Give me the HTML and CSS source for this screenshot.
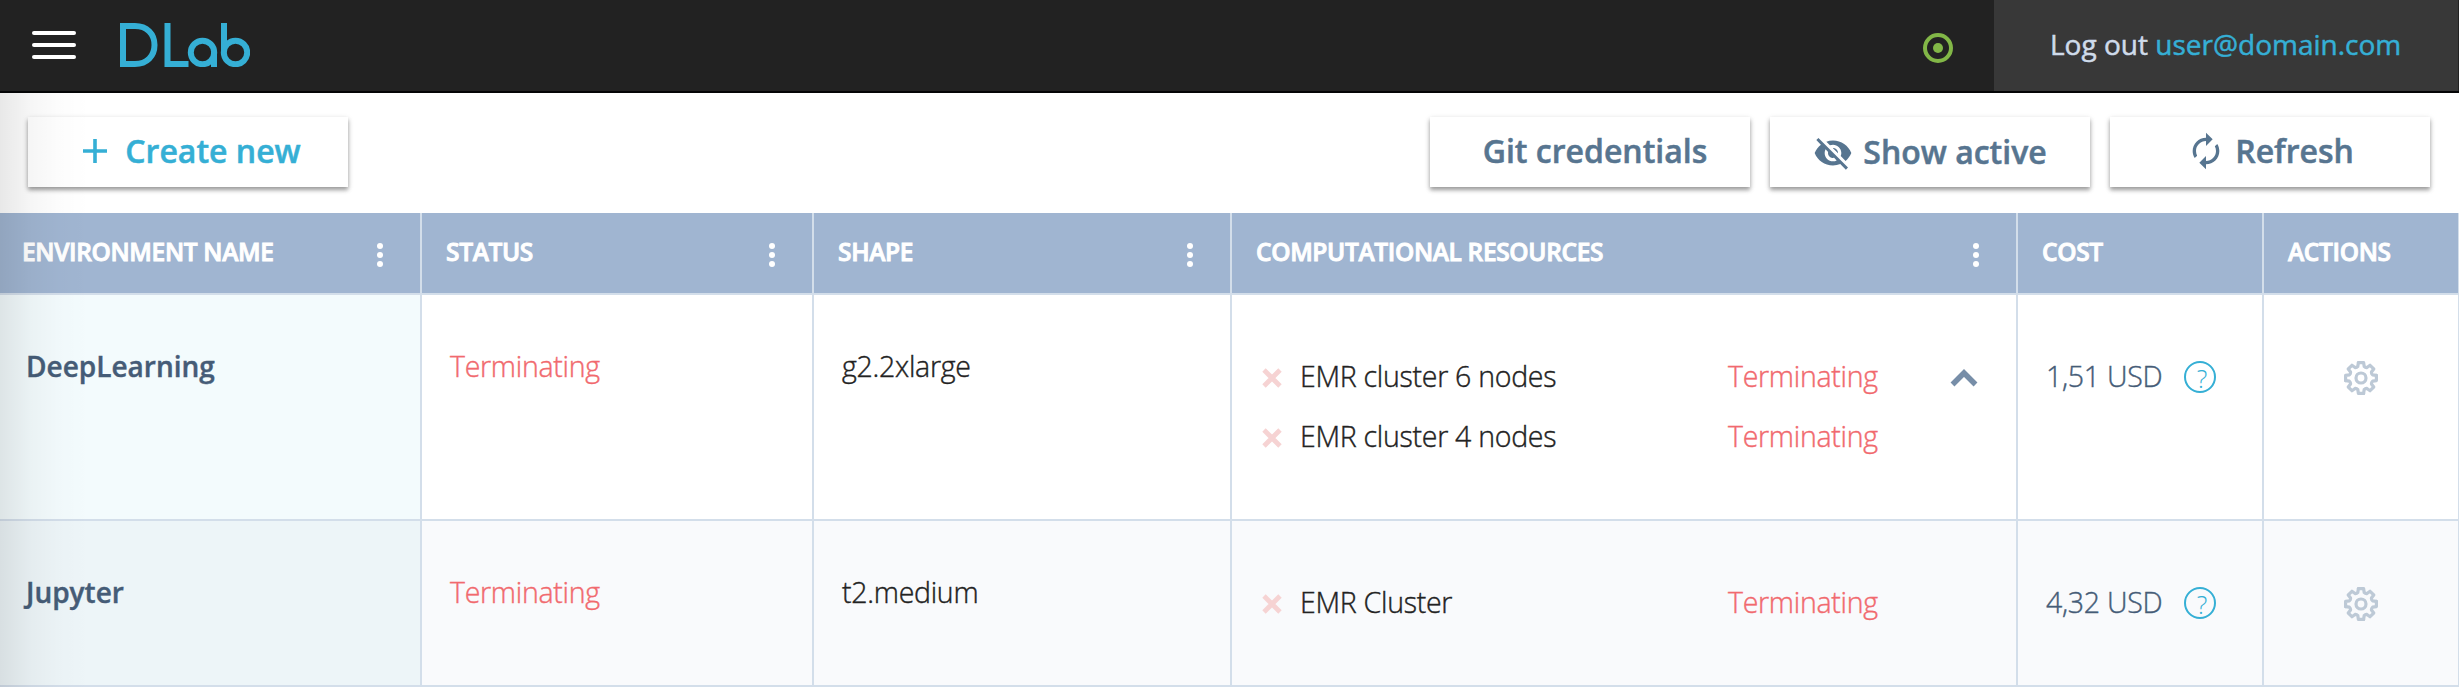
FILE: index.html
```html
<!DOCTYPE html>
<html lang="en">
<head>
<meta charset="utf-8">
<title>DLab</title>
<link rel="stylesheet" href="styles.css">
</head>
<body>
<svg class="defs" width="0" height="0">
  <symbol id="dots" viewBox="0 0 6 24"><circle cx="3" cy="3" r="3"/><circle cx="3" cy="12" r="3"/><circle cx="3" cy="21" r="3"/></symbol>
  <symbol id="cross" viewBox="0 0 20 20"><path d="M2 2 18 18M18 2 2 18" fill="none" stroke="currentColor" stroke-width="4.800"/></symbol>
  <path id="teeth" d="M-2.600-15.400H2.600L3.200-11.600Q4.300-10.300 5.940-10.460L9.050-12.730 12.730-9.050 10.460-5.940Q10.300-4.300 11.600-3.200L15.400-2.600"/>
  <symbol id="gear" viewBox="-17 -17 34 34"><g fill="none" stroke="currentColor" stroke-width="3.200" stroke-linejoin="round" stroke-linecap="round"><circle r="5"/><use href="#teeth"/><use href="#teeth" transform="rotate(90)"/><use href="#teeth" transform="rotate(180)"/><use href="#teeth" transform="rotate(270)"/></g></symbol>
</svg>
<header class="topbar">
  <div class="burger"><i></i><i></i><i></i></div>
  <svg class="logo" role="img" aria-label="DLab" viewBox="0 0 130 44"><g fill="none" stroke="#35afd5" stroke-width="6"><path d="M3 3H15C27 3 34.500 11 34.500 22S27 41 15 41H3Z"/><path d="M47.500 0V41H68.500"/><circle cx="82.500" cy="29.500" r="11.700"/><path d="M94 29V44"/><path d="M104 0V29.500"/><circle cx="115.500" cy="29.500" r="11.700"/></g></svg>
  <svg class="health" viewBox="0 0 30 30"><circle cx="15" cy="15" r="13" fill="none" stroke="#82b747" stroke-width="4"/><circle cx="15" cy="15" r="5" fill="#82b747"/></svg>
  <div class="logout">Log out&nbsp;<a>user@domain.com</a></div>
</header>
<div class="tools">
  <button class="btn create"><svg viewBox="0 0 24 24" width="24" height="24"><path d="M12 0V24M0 12H24" stroke="currentColor" stroke-width="3.600"/></svg>Create new</button>
  <button class="btn git">Git credentials</button>
  <button class="btn show"><svg viewBox="0 0 24 24" width="40" height="40"><path fill="currentColor" d="M12 7c2.760 0 5 2.240 5 5 0 .65-.13 1.260-.36 1.830l2.920 2.920c1.510-1.260 2.700-2.890 3.430-4.750-1.730-4.390-6-7.500-11-7.500-1.400 0-2.740.25-3.980.7l2.160 2.160C10.740 7.130 11.350 7 12 7zM2 4.270l2.280 2.280.46.46C3.080 8.300 1.780 10.020 1 12c1.730 4.390 6 7.500 11 7.500 1.550 0 3.030-.3 4.380-.84l.42.42L19.730 22 21 20.730 3.270 3 2 4.270zM7.530 9.800l1.550 1.550c-.05.21-.08.43-.08.65 0 1.660 1.340 3 3 3 .22 0 .44-.03.65-.08l1.550 1.550c-.67.33-1.410.53-2.200.53-2.760 0-5-2.240-5-5 0-.79.2-1.530.53-2.200zm4.310-.78l3.150 3.150.02-.16c0-1.660-1.340-3-3-3l-.17.01z"/></svg>Show active</button>
  <button class="btn refresh"><svg viewBox="0 0 24 24" width="40" height="40"><path fill="currentColor" d="M12 6v3l4-4-4-4v3c-4.420 0-8 3.580-8 8 0 1.570.46 3.030 1.240 4.260L6.700 14.800c-.45-.83-.7-1.790-.7-2.800 0-3.310 2.690-6 6-6zm6.760 1.740L17.300 9.200c.44.84.7 1.790.7 2.800 0 3.310-2.690 6-6 6v-3l-4 4 4 4v-3c4.420 0 8-3.580 8-8 0-1.570-.46-3.030-1.240-4.260z"/></svg>Refresh</button>
</div>
<main class="grid">
  <div class="row head">
    <div>Environment name<svg class="dots"><use href="#dots"/></svg></div>
    <div>Status<svg class="dots"><use href="#dots"/></svg></div>
    <div>Shape<svg class="dots"><use href="#dots"/></svg></div>
    <div>Computational resources<svg class="dots"><use href="#dots"/></svg></div>
    <div>Cost</div>
    <div>Actions</div>
  </div>
  <div class="row first">
    <div class="name">DeepLearning</div>
    <div class="red">Terminating</div>
    <div>g2.2xlarge</div>
    <div class="resources">
      <div class="resource"><svg class="cross"><use href="#cross"/></svg><span class="cluster">EMR cluster 6 nodes</span><span class="red">Terminating</span><svg class="chevron" viewBox="0 0 28 18"><path d="M2.500 15.500 14 4 25.500 15.500" fill="none" stroke="#778ea8" stroke-width="5.500"/></svg></div>
      <div class="resource"><svg class="cross"><use href="#cross"/></svg><span class="cluster">EMR cluster 4 nodes</span><span class="red">Terminating</span></div>
    </div>
    <div class="cost">1,51 USD<span class="help">?</span></div>
    <div class="actions"><svg class="gear"><use href="#gear"/></svg></div>
  </div>
  <div class="row second">
    <div class="name">Jupyter</div>
    <div class="red">Terminating</div>
    <div>t2.medium</div>
    <div class="resources">
      <div class="resource"><svg class="cross"><use href="#cross"/></svg><span class="cluster">EMR Cluster</span><span class="red">Terminating</span></div>
    </div>
    <div class="cost">4,32 USD<span class="help">?</span></div>
    <div class="actions"><svg class="gear"><use href="#gear"/></svg></div>
  </div>
</main>
<div class="edge-shade"></div>
</body>
</html>
```
FILE: styles.css
```css
* { box-sizing: border-box; }
body { margin: 0; width: 2459px; height: 687px; overflow: hidden; background: #fff; font-family: "Open Sans", sans-serif; position: relative; }
.defs { display: block; position: absolute; }
.topbar { display: flex; height: 93px; background: #222; border-bottom: 2px solid #040506; }
.burger { display: flex; flex-direction: column; gap: 8px; margin: 31px 0 0 32px; width: 44px; }
.burger i { height: 4px; border-radius: 2px; background: #fff; }
.logo { width: 130px; height: 44px; margin: 23px 0 0 44px; }
.health { width: 30px; height: 30px; margin: 33px 0 0 auto; }
.logout { width: 464px; height: 91px; margin-left: 41px; margin-right: 1px; padding: 25px 0 0 56px; background: #383838; color: #cfdbea; font-size: 28px; line-height: 38px; white-space: nowrap; -webkit-text-stroke: .5px; }
.logout a { color: #35afd5; }
.tools { display: flex; gap: 20px; height: 120px; padding: 24px 29px 0 28px; }
.btn { display: flex; align-items: center; justify-content: center; gap: 9px; width: 320px; height: 70px; padding: 0 0 3px; border: 0; background: #fff; box-shadow: 0 3px 4px rgba(0,0,0,.3), 0 2px 6px rgba(0,0,0,.16); color: #577590; font: 600 32px/42px "Open Sans", sans-serif; white-space: nowrap; -webkit-text-stroke: .5px; }
.btn svg { flex: none; }
.create { margin-right: auto; padding-left: 8px; gap: 18px; color: #35afd5; }
.git { padding-left: 10px; }
.show { padding-bottom: 0; gap: 10px; }
.show svg { margin-top: 2px; }
.row { display: grid; grid-template-columns: 422px 392px 418px 786px 246px 195px; border-bottom: 2px solid #d3deea; }
.row > div { border-right: 2px solid #d3deea; }
.row > div:last-child { border-right-width: 1px; }
.head { height: 82px; background: #a0b5d1; color: #fff; font-size: 24.5px; font-weight: 600; line-height: 34px; letter-spacing: -.34px; text-transform: uppercase; -webkit-text-stroke: .9px; }
.head > div { display: flex; padding: 22px 37px 0 24px; white-space: nowrap; }
.head > div:first-child { padding-left: 22px; }
.dots { width: 6px; height: 24px; margin: 8px 0 0 auto; fill: #fff; stroke: none; }
.first, .second { font-size: 28.5px; line-height: 40px; letter-spacing: -.28px; font-weight: 300; color: #222; -webkit-text-stroke: .4px; }
.first { height: 226px; }
.second { height: 166px; background: #f9fafc; }
.first > div, .second > div { padding: 51px 0 0 28px; }
.row > .name { padding-left: 26px; background: #f3fbfd; color: #455c77; font-weight: 600; font-size: 28px; letter-spacing: 0; }
.second > .name { background: #edf5f8; }
.row .red { color: #f1696e; }
.row > .resources { padding: 61px 0 0 30px; }
.resource { display: flex; align-items: center; height: 40px; margin-bottom: 20px; }
.cross { width: 20px; height: 20px; margin-top: 4px; color: #f6d3d3; }
.cluster { width: 428px; margin-left: 18px; }
.chevron { width: 28px; height: 18px; margin: 4px 0 0 72px; }
.row > .cost { display: flex; padding: 61px 0 0 28px; color: #455c77; }
.help { width: 32px; height: 32px; margin: 5px 0 0 22px; border: 2px solid #35afd5; border-radius: 50%; color: #35afd5; font-size: 25px; line-height: 31px; text-align: center; padding-left: 3px; -webkit-text-stroke: 0; }
.row > .actions { padding: 66px 0 0 80px; }
.gear { display: block; width: 34px; height: 34px; color: #bdc9d6; }
.edge-shade { position: absolute; left: 0; top: 93px; width: 90px; height: 594px; background: linear-gradient(90deg, rgba(0,0,0,.09), rgba(0,0,0,.035) 35%, rgba(0,0,0,.012) 65%, transparent); pointer-events: none; }
```
